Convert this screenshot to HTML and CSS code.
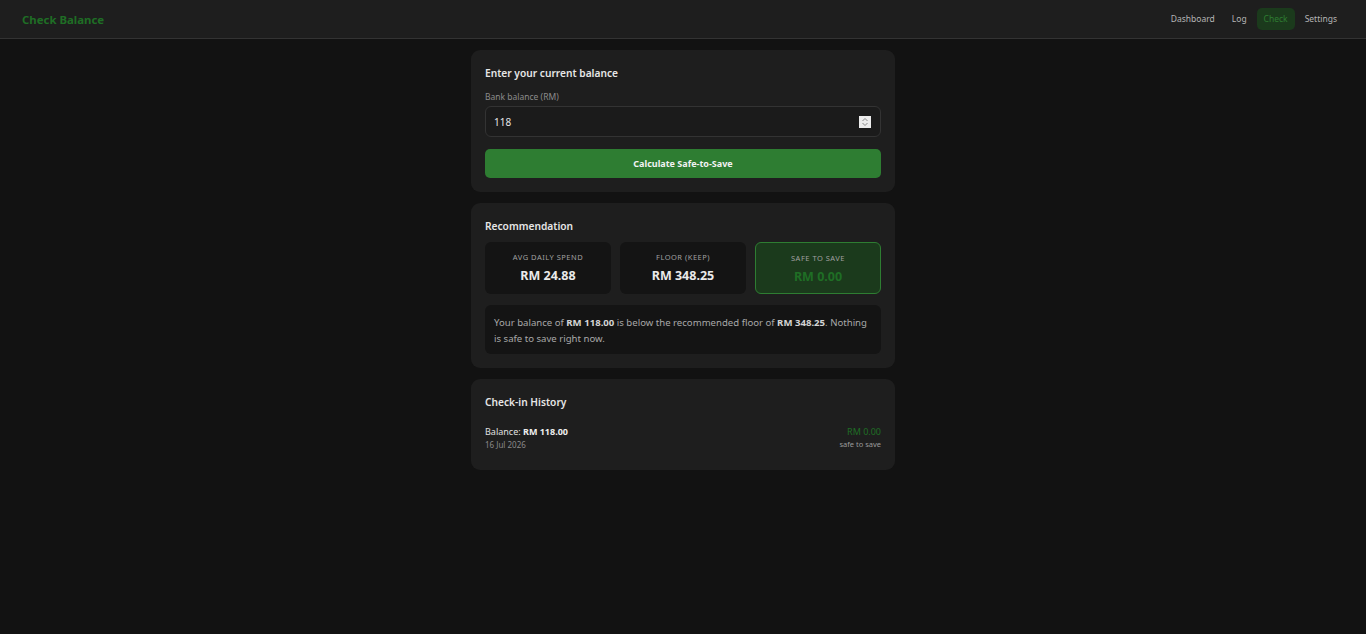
FILE: index.html
```html
<!DOCTYPE html>
<html lang="en">
<head>
<meta charset="utf-8">
<title>Check Balance</title>
<link rel="stylesheet" href="styles.css">
</head>
<body>
<header class="topbar">
  <div class="brand">Check Balance</div>
  <nav class="nav">
    <a class="nav-link">Dashboard</a>
    <a class="nav-link">Log</a>
    <a class="nav-link active">Check</a>
    <a class="nav-link">Settings</a>
  </nav>
</header>
<main class="container">
  <section class="card">
    <h2 class="card-title">Enter your current balance</h2>
    <label class="field-label">Bank balance (RM)</label>
    <div class="input-box">
      <input class="input" type="text" value="118">
      <span class="spin">
        <svg width="8" height="10" viewBox="0 0 8 10"><path d="M1.5 4 L4 1.5 L6.5 4" fill="none" stroke="#8a8a8a" stroke-width="1"/><path d="M1.5 6 L4 8.5 L6.5 6" fill="none" stroke="#8a8a8a" stroke-width="1"/></svg>
      </span>
    </div>
    <button class="btn">Calculate Safe-to-Save</button>
  </section>

  <section class="card">
    <h2 class="card-title tight">Recommendation</h2>
    <div class="stats">
      <div class="stat">
        <div class="stat-label">Avg daily spend</div>
        <div class="stat-value">RM 24.88</div>
      </div>
      <div class="stat">
        <div class="stat-label">Floor (keep)</div>
        <div class="stat-value">RM 348.25</div>
      </div>
      <div class="stat safe">
        <div class="stat-label">Safe to save</div>
        <div class="stat-value">RM 0.00</div>
      </div>
    </div>
    <p class="message">Your balance of <strong>RM 118.00</strong> is below the recommended floor of <strong>RM 348.25</strong>. Nothing is safe to save right now.</p>
  </section>

  <section class="card">
    <h2 class="card-title">Check-in History</h2>
    <div class="history-row">
      <div class="history-left">
        <div class="history-balance">Balance: <strong>RM 118.00</strong></div>
        <div class="history-date">16 Jul 2026</div>
      </div>
      <div class="history-right">
        <div class="history-amount">RM 0.00</div>
        <div class="history-note">safe to save</div>
      </div>
    </div>
  </section>
</main>
</body>
</html>
```

FILE: styles.css
```css
* { box-sizing: border-box; }
html, body { margin: 0; padding: 0; }
body {
  background: #121212;
  color: #e0e0e0;
  font-family: "Noto Sans", "Open Sans", sans-serif;
  min-height: 634px;
}
.topbar {
  height: 39px;
  background: #1e1e1e;
  border-bottom: 1px solid #333;
  display: flex;
  align-items: center;
  justify-content: space-between;
  padding: 0 22px 0 22px;
}
.brand {
  color: #1f6e25;
  font-weight: 700;
  font-size: 11.4px;
}
.nav { display: flex; gap: 3px; align-items: center; }
.nav-link {
  font-size: 8.5px;
  color: #b5b5b5;
  padding: 5px 7px;
  border-radius: 5px;
  line-height: 12px;
}
.nav-link.active {
  background: #1b3a1c;
  color: #2e7d32;
}
.container {
  width: 424px;
  margin: 11px auto 0;
  display: flex;
  flex-direction: column;
  gap: 11px;
}
.card {
  background: #1e1e1e;
  border-radius: 9px;
  padding: 14px;
}
.card-title {
  margin: 0 0 9px;
  font-size: 10.2px;
  font-weight: 600;
  color: #e6e6e6;
  line-height: 18px;
}
.card-title.tight { margin-bottom: 7px; }
.field-label {
  display: block;
  font-size: 8.5px;
  color: #8c8c8c;
  margin-bottom: 3px;
  line-height: 12px;
}
.input-box {
  display: flex;
  align-items: center;
  height: 31px;
  border: 1px solid #333;
  border-radius: 6px;
  background: #1b1b1b;
  padding: 0 9px 0 8px;
}
.input {
  flex: 1;
  background: transparent;
  border: 0;
  outline: none;
  color: #e6e6e6;
  font-family: "Noto Sans", sans-serif;
  font-size: 10px;
  padding: 0;
}
.spin {
  width: 12px;
  height: 12px;
  background: #ececec;
  display: flex;
  align-items: center;
  justify-content: center;
}
.btn {
  display: block;
  width: 100%;
  margin-top: 12px;
  height: 29px;
  border: 0;
  border-radius: 5px;
  background: #2e7d32;
  color: #f2f2f2;
  font-family: "Noto Sans", sans-serif;
  font-weight: 700;
  font-size: 9px;
}
.stats {
  display: grid;
  grid-template-columns: repeat(3, 1fr);
  gap: 9px;
}
.stat {
  background: #141414;
  border-radius: 6px;
  height: 52px;
  display: flex;
  flex-direction: column;
  align-items: center;
  justify-content: center;
  gap: 6px;
}
.stat-label {
  text-transform: uppercase;
  font-size: 7.5px;
  letter-spacing: 0.5px;
  color: #a0a0a0;
  line-height: 10px;
}
.stat-value {
  font-size: 12.5px;
  font-weight: 700;
  color: #eaeaea;
  line-height: 16px;
}
.stat.safe {
  background: #1b3a1c;
  border: 1px solid #2e7d32;
}
.stat.safe .stat-label { margin-top: 2px; }
.stat.safe .stat-value { color: #1f6e25; }
.message {
  margin: 11px 0 0;
  background: #141414;
  border-radius: 6px;
  padding: 10px 9px 7px;
  font-size: 9.6px;
  line-height: 16px;
  color: #a8a8a8;
}
.message strong { color: #d4d4d4; }
.history-row {
  display: flex;
  justify-content: space-between;
  align-items: flex-start;
  margin-top: 14px;
  padding-bottom: 6px;
}
.history-balance { font-size: 9px; color: #e0e0e0; line-height: 13px; }
.history-balance strong { color: #eee; }
.history-date { font-size: 8px; color: #8a8a8a; margin-top: 1px; }
.history-right { text-align: right; }
.history-amount { font-size: 9px; color: #1f6e25; line-height: 13px; }
.history-note { font-size: 7.5px; color: #9a9a9a; margin-top: 1px; }
```
